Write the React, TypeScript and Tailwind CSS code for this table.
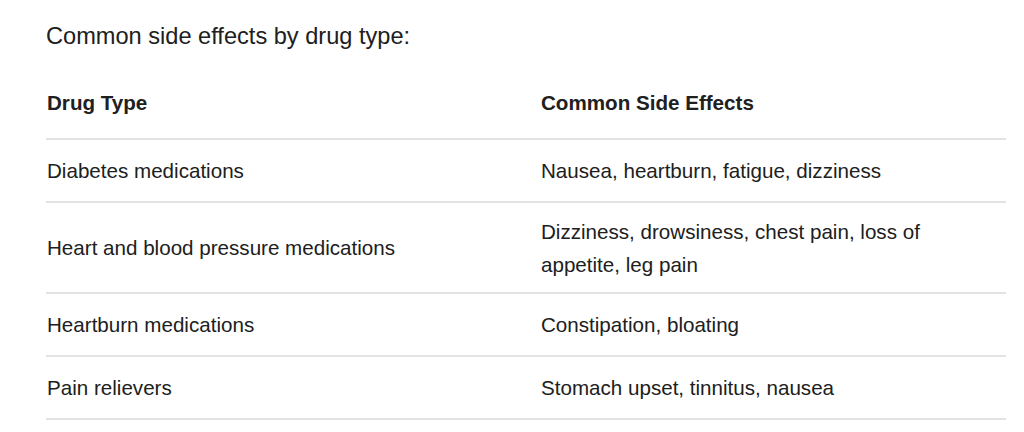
export default function App() {
  const rows: [string, string, string][] = [
    ["Diabetes medications", "Nausea, heartburn, fatigue, dizziness", "h-[63px]"],
    ["Heart and blood pressure medications", "Dizziness, drowsiness, chest pain, loss of appetite, leg pain", "h-[91px]"],
    ["Heartburn medications", "Constipation, bloating", "h-[63px]"],
    ["Pain relievers", "Stomach upset, tinnitus, nausea", "h-[63px]"],
  ];
  return (
    <div
      className="w-[1024px] h-[432px] bg-white text-[#202020] overflow-hidden"
      style={{ fontFamily: '"Liberation Sans", Arial, sans-serif' }}
    >
      <div className="pl-[46px] pr-[18px] pt-[20px]">
        <div className="text-[23.6px] leading-[33px]">Common side effects by drug type:</div>
        <div className="grid grid-cols-[495px_1fr] h-[87px] items-end pb-[19px] border-b-2 border-[#e3e3e3] font-bold text-[20.6px] leading-[33px]">
          <div className="pl-px">Drug Type</div>
          <div>Common Side Effects</div>
        </div>
        {rows.map(([a, b, h]) => (
          <div
            key={a}
            className={`grid grid-cols-[495px_1fr] items-center border-b-2 border-[#e3e3e3] text-[20.6px] leading-[33px] ${h}`}
          >
            <div className="pl-px">{a}</div>
            <div className="pr-[20px]">{b}</div>
          </div>
        ))}
      </div>
    </div>
  );
}
